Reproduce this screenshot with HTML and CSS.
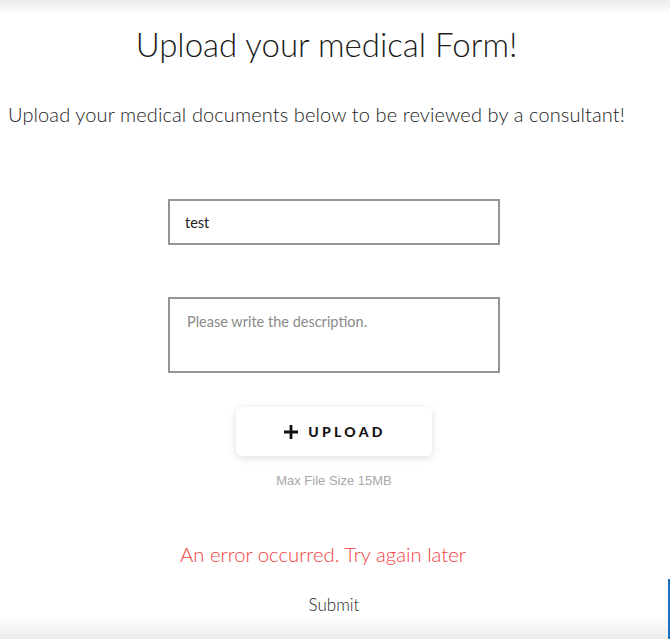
FILE: index.html
```html
<!DOCTYPE html>
<html>
<head>
<meta charset="utf-8">
<link rel="stylesheet" href="styles.css">
</head>
<body>
<div class="page">
  <div class="top-shade"></div>
  <h1 class="title">Upload your medical Form!</h1>
  <p class="subtitle">Upload your medical documents below to be reviewed by a consultant!</p>
  <form class="form">
    <input class="field" type="text" value="test">
    <textarea class="area" placeholder="Please write the description."></textarea>
    <button type="button" class="upload">
      <svg class="plus" width="14" height="14" viewBox="0 0 14 14"><path d="M5.6 0h2.8v5.6H14v2.8H8.4V14H5.6V8.4H0V5.6h5.6z" fill="#111"/></svg>
      <span>UPLOAD</span>
    </button>
    <div class="hint">Max File Size 15MB</div>
    <div class="error">An error occurred. Try again later</div>
    <div class="submit">Submit</div>
  </form>
  <div class="bottom-shade"></div>
  <div class="edge"></div>
</div>
</body>
</html>
```
FILE: styles.css
```css
html, body {
  margin: 0;
  padding: 0;
  background: #fff;
}
.page {
  position: relative;
  width: 670px;
  height: 639px;
  overflow: hidden;
  font-family: "Lato", "Open Sans", sans-serif;
  color: #222;
}
.top-shade {
  position: absolute;
  left: 0; top: 0; right: 0;
  height: 14px;
  background: linear-gradient(#ececec, rgba(255,255,255,0));
}
.bottom-shade {
  position: absolute;
  left: 0; right: 0; bottom: 0;
  height: 22px;
  background: linear-gradient(rgba(255,255,255,0), #ececec);
}
.edge {
  position: absolute;
  right: 0; top: 579px; bottom: 0;
  width: 2px;
  background: #1a6fc0;
}
.title {
  margin: 0;
  padding-top: 25px;
  padding-right: 17px;
  text-align: center;
  font-family: "Lato", sans-serif;
  font-weight: 300;
  font-size: 33px;
  line-height: 38px;
  color: #1a1a1a;
}
.subtitle {
  margin: 0;
  padding-top: 39px;
  padding-left: 8px;
  font-weight: 300;
  font-size: 20px;
  letter-spacing: 0.12px;
  line-height: 24px;
  color: #222;
  white-space: nowrap;
}
.form {
  display: flex;
  flex-direction: column;
  align-items: center;
  padding-top: 73px;
  padding-right: 2px;
}
.field {
  box-sizing: border-box;
  width: 332px;
  height: 46px;
  border: 2px solid #959595;
  padding: 0 15px;
  font-family: "Lato", sans-serif;
  font-size: 14.5px;
  color: #222;
  outline: none;
  margin: 0 0 52px 0;
}
.area {
  box-sizing: border-box;
  width: 332px;
  height: 76px;
  border: 2px solid #959595;
  padding: 14px 17px;
  font-family: "Lato", sans-serif;
  font-size: 14.5px;
  resize: none;
  outline: none;
  margin: 0 0 34px 0;
}
.area::placeholder {
  color: #8a8a8a;
}
.upload {
  width: 196px;
  height: 49px;
  border: none;
  border-radius: 6px;
  background: #fff;
  box-shadow: 0 2px 9px rgba(0,0,0,0.13);
  display: flex;
  align-items: center;
  justify-content: center;
  gap: 10px;
  font-family: "Lato", sans-serif;
  font-weight: 900;
  font-size: 14px;
  letter-spacing: 3.3px;
  color: #111;
  padding: 0;
  padding-left: 2px;
  cursor: pointer;
}
.plus {
  flex: none;
}
.hint {
  margin-top: 17px;
  font-family: "Liberation Sans", sans-serif;
  font-size: 13px;
  color: #a8a8a8;
}
.error {
  margin-top: 54px;
  margin-right: 22px;
  font-weight: 300;
  font-size: 20.3px;
  color: #f4403f;
}
.submit {
  margin-top: 28px;
  font-size: 17px;
  font-weight: 300;
  color: #222;
}
```
